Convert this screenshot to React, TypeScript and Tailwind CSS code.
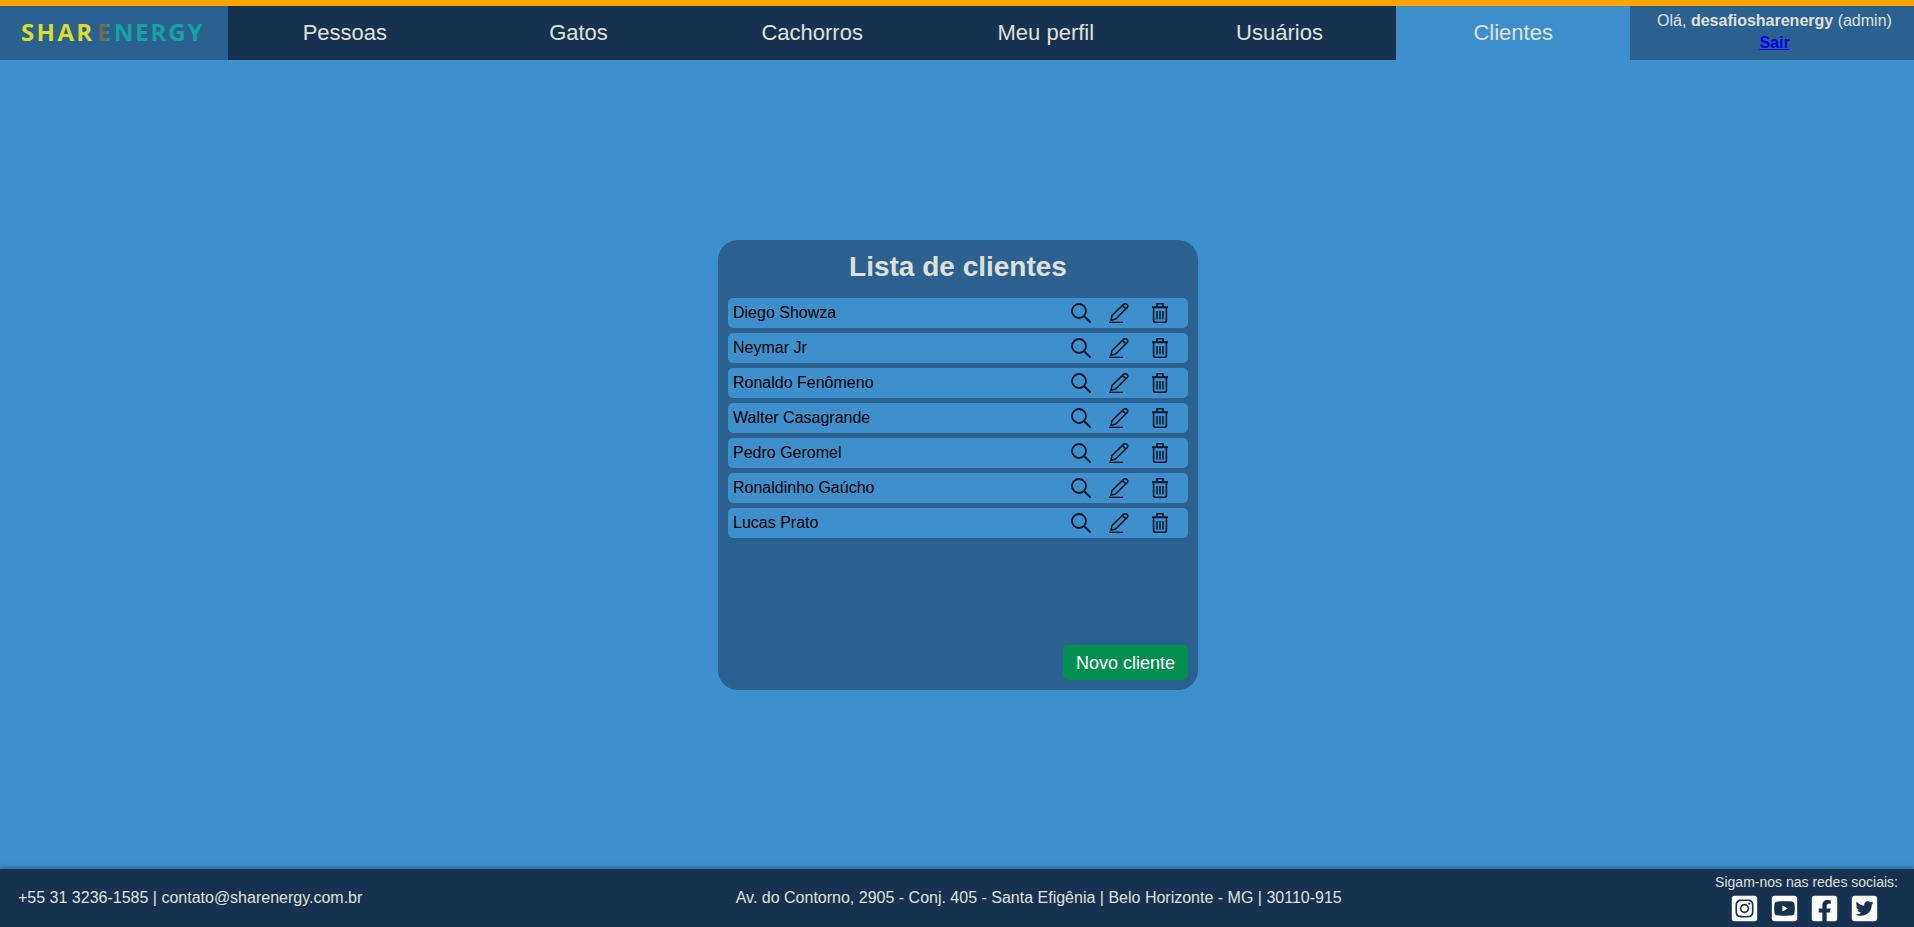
import React from "react";
import { FaInstagramSquare, FaYoutubeSquare, FaFacebookSquare, FaTwitterSquare } from "react-icons/fa";

const menu = ["Pessoas", "Gatos", "Cachorros", "Meu perfil", "Usuários"];

const clients = [
  "Diego Showza",
  "Neymar Jr",
  "Ronaldo Fenômeno",
  "Walter Casagrande",
  "Pedro Geromel",
  "Ronaldinho Gaúcho",
  "Lucas Prato",
];

const SearchIcon = () => (
  <svg width="20" height="20" viewBox="0 0 20 20" fill="none" stroke="#071524" strokeWidth="1.8">
    <circle cx="8" cy="8" r="7" />
    <path d="M13.2 13.2 L19.6 19.6" strokeWidth="2" />
  </svg>
);

const PencilIcon = () => (
  <svg width="20" height="20" viewBox="0 0 20 20" fill="none" stroke="#071524" strokeWidth="1.5">
    <path d="M0 19.4 H14" />
    <path d="M3 12.6 L14.6 1.4 C15.5 .5 16.8 .4 17.9 1.4 C19 2.4 19 3.7 18.1 4.6 L6.6 16 L2 17.2 Z" />
    <path d="M13.4 2.6 L16.8 5.8" />
  </svg>
);

const TrashIcon = () => (
  <svg width="16" height="20" viewBox="0 0 16 20" fill="none" stroke="#071524" strokeWidth="1.6">
    <path d="M0 4.2 H16" strokeWidth="2" />
    <path d="M5 3.5 V.8 H11 V3.5" />
    <path d="M1.6 5 V17.4 C1.6 18.7 2.3 19.2 3.6 19.2 H12.4 C13.7 19.2 14.4 18.7 14.4 17.4 V5" />
    <path d="M5 8 V16.5 M8 8 V16.5 M11 8 V16.5" strokeWidth="1.5" />
  </svg>
);

const App = () => {
  return (
    <div className="flex flex-col h-screen bg-[#3d90cc] font-['Liberation_Sans',Arial,sans-serif] text-[#e0e0d8] overflow-hidden">
      <header className="flex h-[60px] border-t-[6px] border-[#ffa500] shrink-0">
        <div className="w-[228px] shrink-0 bg-[#2b6190] flex items-center pl-[21px] pb-[2px] font-['Open_Sans',sans-serif] font-bold text-[24px] leading-none">
          <span className="text-[#d9dc2c] tracking-[2.4px]">SHAR</span>
          <span className="ml-[3px] bg-[linear-gradient(90deg,#6d6a4a_68%,#17a2a2_68%)] bg-clip-text text-transparent">E</span>
          <span className="ml-[3px] text-[#17a2a2] tracking-[1.8px]">NERGY</span>
        </div>
        <nav className="flex flex-1 bg-[#163250] text-[22px]">
          {menu.map((item) => (
            <a key={item} className="flex-1 flex items-center justify-center pb-[2px]">
              {item}
            </a>
          ))}
          <a className="flex-1 flex items-center justify-center pb-[2px] bg-[#3d90cc]">Clientes</a>
        </nav>
        <div className="w-[284px] shrink-0 bg-[#2b6190] text-center text-base leading-[22px] pt-[4px] pl-[5px]">
          <p>
            Olá, <b>desafiosharenergy</b> (admin)
          </p>
          <a className="font-bold underline text-[#0000ee]">Sair</a>
        </div>
      </header>

      <main className="flex-1 flex items-center justify-center pl-[2px] pt-[1px]">
        <section className="w-[480px] h-[450px] bg-[#2b6190] rounded-[20px] px-[10px] flex flex-col">
          <h1 className="text-[28px] font-bold text-center leading-[32px] pt-[11px] mb-[15px]">Lista de clientes</h1>
          <ul className="flex flex-col gap-[5px]">
            {clients.map((client) => (
              <li key={client} className="flex items-center h-[30px] bg-[#3d90cc] rounded-[5px] pl-[5px] text-black text-base">
                <span className="flex-1">{client}</span>
                <SearchIcon />
                <span className="ml-[18px]">
                  <PencilIcon />
                </span>
                <span className="ml-[23px] mr-[20px]">
                  <TrashIcon />
                </span>
              </li>
            ))}
          </ul>
          <button className="mt-auto mb-[10px] self-end w-[125px] h-[35px] bg-[#038f50] rounded-[5px] text-white text-lg">
            Novo cliente
          </button>
        </section>
      </main>

      <footer className="flex items-center justify-between h-[58px] shrink-0 bg-[#163250] shadow-[0_-2px_4px_rgba(0,0,0,0.25)] pl-[18px] pr-[16px] text-base">
        <p>+55 31 3236-1585 | contato@sharenergy.com.br</p>
        <p>Av. do Contorno, 2905 - Conj. 405 - Santa Efigênia | Belo Horizonte - MG | 30110-915</p>
        <div className="flex flex-col items-center gap-[3px] text-sm leading-[17px]">
          <p>Sigam-nos nas redes sociais:</p>
          <div className="flex gap-[11px] text-white pr-[4px]">
            <FaInstagramSquare size={29} />
            <FaYoutubeSquare size={29} />
            <FaFacebookSquare size={29} />
            <FaTwitterSquare size={29} />
          </div>
        </div>
      </footer>
    </div>
  );
};

export default App;
